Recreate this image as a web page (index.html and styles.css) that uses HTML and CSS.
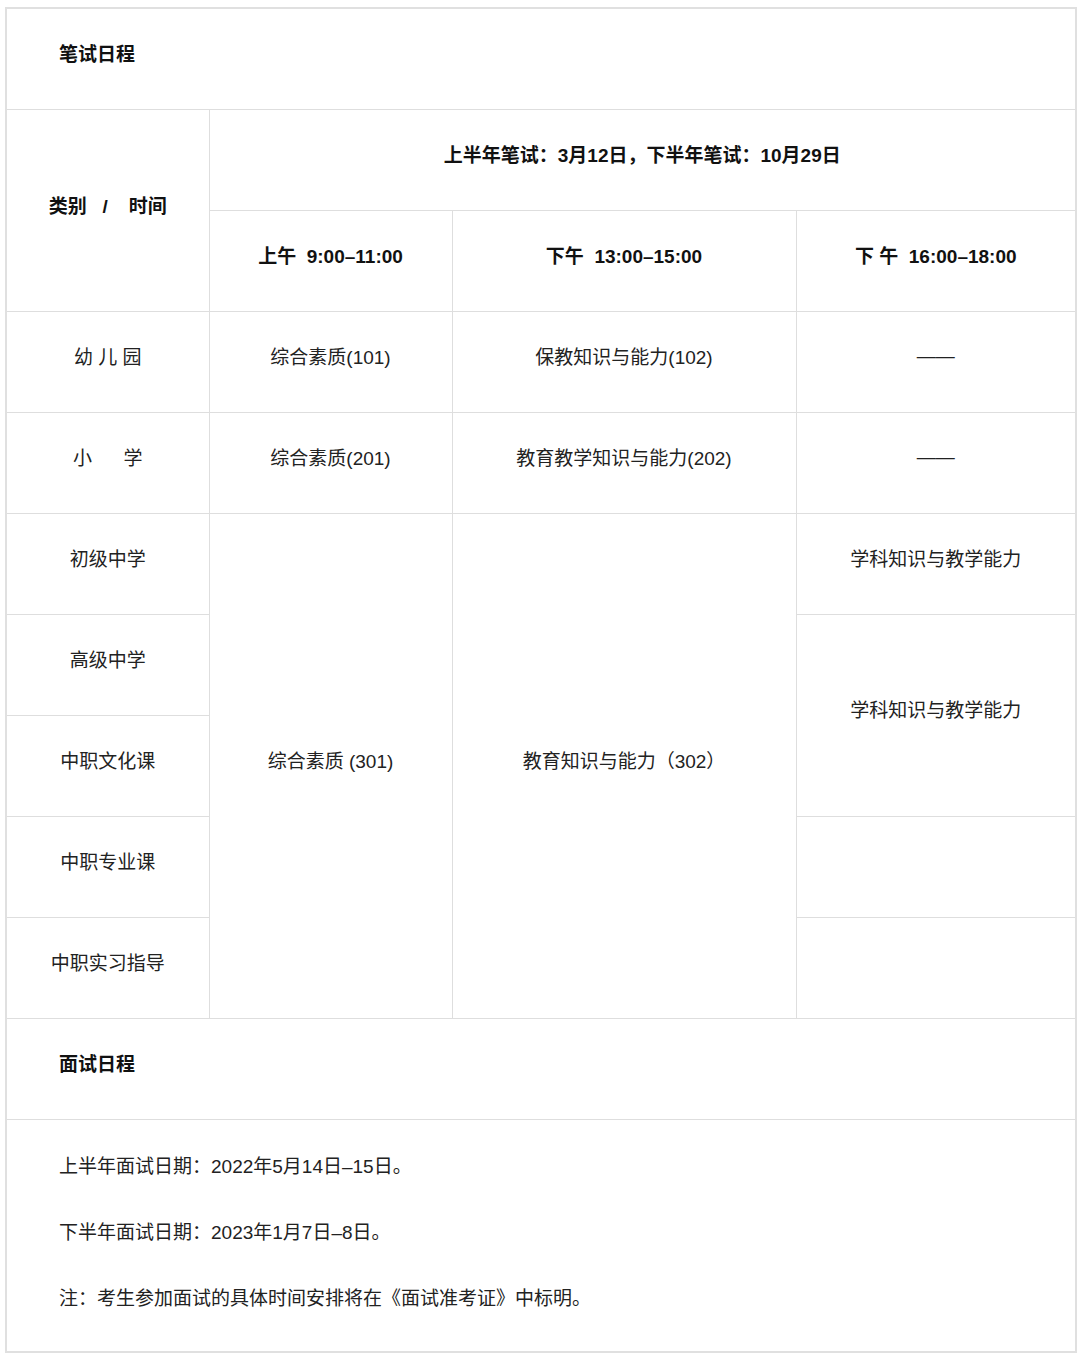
FILE: index.html
```html
<!DOCTYPE html>
<html lang="zh">
<head>
<meta charset="utf-8">
<title>笔试日程</title>
<link rel="stylesheet" href="styles.css">
</head>
<body>
<div class="page">
<table class="sched">
  <colgroup>
    <col class="c1"><col class="c2"><col class="c3"><col class="c4">
  </colgroup>
  <tr>
    <td colspan="4" class="section">笔试日程</td>
  </tr>
  <tr>
    <td rowspan="2" class="head">类别&nbsp;&nbsp;&nbsp;/&nbsp;&nbsp;&nbsp;&nbsp;时间</td>
    <td colspan="3" class="head">上半年笔试：3月12日，下半年笔试：10月29日</td>
  </tr>
  <tr>
    <td class="head">上午&nbsp;&nbsp;9:00–11:00</td>
    <td class="head">下午&nbsp;&nbsp;13:00–15:00</td>
    <td class="head">下 午&nbsp;&nbsp;16:00–18:00</td>
  </tr>
  <tr>
    <td>幼 儿 园</td>
    <td>综合素质(101)</td>
    <td>保教知识与能力(102)</td>
    <td>——</td>
  </tr>
  <tr>
    <td>小&nbsp;&nbsp;&nbsp;&nbsp;&nbsp;&nbsp;学</td>
    <td>综合素质(201)</td>
    <td>教育教学知识与能力(202)</td>
    <td>——</td>
  </tr>
  <tr>
    <td>初级中学</td>
    <td rowspan="5">综合素质 (301)</td>
    <td rowspan="5">教育知识与能力（302）</td>
    <td>学科知识与教学能力</td>
  </tr>
  <tr>
    <td>高级中学</td>
    <td rowspan="2" class="up">学科知识与教学能力</td>
  </tr>
  <tr>
    <td>中职文化课</td>
  </tr>
  <tr>
    <td>中职专业课</td>
    <td></td>
  </tr>
  <tr>
    <td>中职实习指导</td>
    <td></td>
  </tr>
  <tr>
    <td colspan="4" class="section">面试日程</td>
  </tr>
  <tr>
    <td colspan="4" class="notes">
      <p>上半年面试日期：2022年5月14日–15日。</p>
      <p>下半年面试日期：2023年1月7日–8日。</p>
      <p>注：考生参加面试的具体时间安排将在《面试准考证》中标明。</p>
    </td>
  </tr>
</table>
</div>
</body>
</html>
```

FILE: styles.css
```css
html, body {
  margin: 0;
  padding: 0;
  background: #ffffff;
}

.page {
  padding: 7px 5px 0 5px;
}

.sched {
  width: 1070px;
  table-layout: fixed;
  border-collapse: collapse;
  border: 2px solid #e0e0e0;
  font-family: "Liberation Sans", "Noto Sans CJK SC", sans-serif;
  font-size: 19px;
  color: #222222;
}

.c1 { width: 203px; }
.c2 { width: 243px; }
.c3 { width: 344px; }
.c4 { width: 280px; }

.sched tr {
  height: 101px;
}

.sched td {
  border: 1px solid #dedede;
  text-align: center;
  vertical-align: middle;
  padding: 0 0 12px 0;
}

.sched td.head {
  font-weight: bold;
  color: #111111;
}

.sched td.section {
  text-align: left;
  padding-left: 52px;
  font-weight: bold;
  color: #111111;
}

.sched td.up {
  padding-bottom: 14px;
}

.sched td.notes {
  text-align: left;
  padding: 32px 52px 37px 52px;
}

.notes p {
  margin: 0 0 36px 0;
  line-height: 30px;
}

.notes p:last-child {
  margin-bottom: 0;
}
```
